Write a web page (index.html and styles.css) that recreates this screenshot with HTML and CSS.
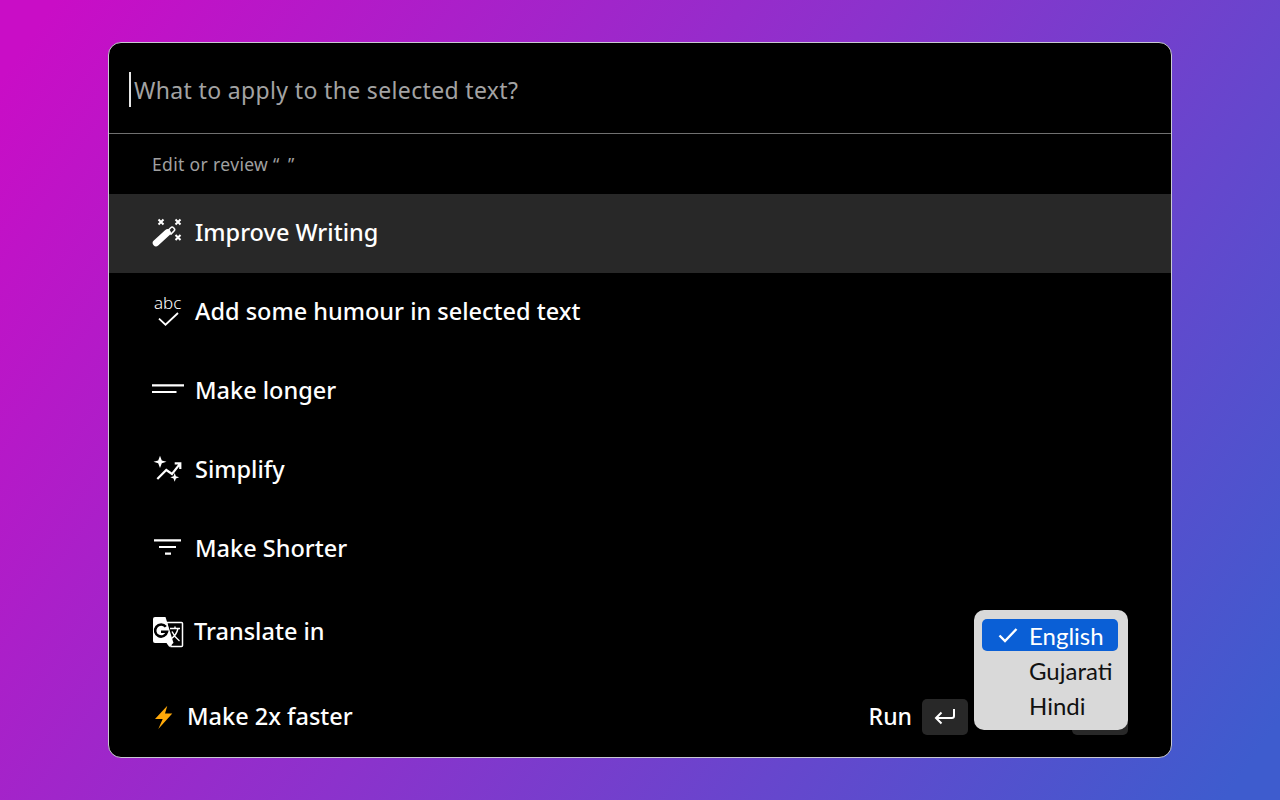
FILE: index.html
```html
<!DOCTYPE html>
<html lang="en">
<head>
<meta charset="utf-8">
<title>Apply to selected text</title>
<link rel="stylesheet" href="styles.css">
</head>
<body>

<div class="panel">
  <div class="prompt">
    <span class="caret"></span>
    <span class="placeholder">What to apply to the selected text?</span>
  </div>

  <div class="section_title">Edit or review “&thinsp; ”</div>

  <div class="row active">
    <svg class="icon" viewBox="0 0 32 32" fill="none" stroke="#fff">
      <path d="M4 26 15.500 15.500" stroke-width="6.500" stroke-linecap="round"/>
      <path d="M16 13.500 19 10.500a1.500 1.500 0 0 1 2.200 0l1 1a1.500 1.500 0 0 1 0 2.200L19 17z" stroke-width="1.600"/>
      <path d="M6.500 2.500l5 5m0-5l-5 5M23.500 2.500l5 5m0-5l-5 5M23.500 18l5 5m0-5l-5 5" stroke-width="2"/>
    </svg>
    <span class="label">Improve Writing</span>
  </div>

  <div class="row">
    <svg class="icon" viewBox="0 0 32 32" fill="none" stroke="#fff" stroke-width="1.800">
      <text x="2" y="12.700" class="abc">abc</text>
      <path d="M7 22.700l6.500 6L26 17"/>
    </svg>
    <span class="label">Add some humour in selected text</span>
  </div>

  <div class="row">
    <svg class="icon" viewBox="0 0 32 32" fill="none" stroke="#fff" stroke-width="2.200">
      <path d="M0 10.300h32M0 17h24.500"/>
    </svg>
    <span class="label">Make longer</span>
  </div>

  <div class="row">
    <svg class="icon" viewBox="0 0 32 32" fill="#fff">
      <path d="M8 1.800l1.800 4.700 4.700 1.300-4.700 1.500L8 14 6.200 9.300 1.500 7.800l4.700-1.300z"/>
      <path d="M22.700 19l1.200 3.200 3.200 1.100-3.200 1.100-1.200 3.300-1.200-3.300-3.200-1.100 3.200-1.100z"/>
      <path d="M5.300 25l9-9 5.700 4 8.300-10.700M22.700 9.300h5.600V15" fill="none" stroke="#fff" stroke-width="2.200"/>
    </svg>
    <span class="label">Simplify</span>
  </div>

  <div class="row">
    <svg class="icon" viewBox="0 0 32 32" fill="none" stroke="#fff" stroke-width="2.200">
      <path d="M2 7.300h27M7 14h17M13 20.700h6"/>
    </svg>
    <span class="label">Make Shorter</span>
  </div>

  <div class="row row_translate">
    <svg class="icon" viewBox="0 0 32 32">
      <path d="M14.500 6.500H29.500a1 1 0 0 1 1 1V29.500a1 1 0 0 1-1 1H19z" fill="#000" stroke="#fff" stroke-width="1.500"/>
      <path d="M3 1H13.500L21.500 27H3a2 2 0 0 1-2-2V3a2 2 0 0 1 2-2z" fill="#fff"/>
      <path d="M14.500 27h6.800l-4 4z" fill="#fff"/>
      <path d="M13.800 10.800A6 6 0 1 0 15 15.800H9" fill="none" stroke="#000" stroke-width="2.600"/>
      <path d="M18 12.500h10M23 10.500v2M26 12.500c-1 4.500-3.500 8-7 10.500M20 15.500c1.500 3.500 3.500 6.500 7.500 9.500" fill="none" stroke="#fff" stroke-width="1.400"/>
    </svg>
    <span class="label">Translate in</span>
  </div>

  <div class="row row_bottom">
    <svg class="bolt" viewBox="0 0 24 26">
      <path d="M15.300 1.700 3 15h7.700L6.300 25l14-15.500H13z" fill="#ffa90a"/>
    </svg>
    <span class="label">Make 2x faster</span>
    <span class="run">Run</span>
    <span class="key">
      <svg viewBox="0 0 24 18" width="24" height="18" fill="none" stroke="#fff" stroke-width="2">
        <path d="M21 1v7a2 2 0 0 1-2 2H3M8.500 4.500 3 10l5.500 5.500"/>
      </svg>
    </span>
    <span class="key key_hidden"></span>
  </div>

  <div class="menu">
    <div class="menu_item selected">
      <svg class="check" viewBox="0 0 20 16" fill="none" stroke="#fff" stroke-width="2.400">
        <path d="M1.500 8.500l5.500 5.500L18.500 2"/>
      </svg>
      English
    </div>
    <div class="menu_item">Gujarati</div>
    <div class="menu_item">Hindi</div>
  </div>
</div>

</body>
</html>
```

FILE: styles.css
```css
html,body {
  margin: 0;
  height: 100%;
}

body {
  width: 1280px;
  height: 800px;
  overflow: hidden;
  display: flex;
  align-items: flex-start;
  justify-content: center;
  background: linear-gradient(125deg, #c90dc6 3%, #8c32cc 48%, #3e5cce 97%);
  font-family: 'Noto Sans', 'Open Sans', sans-serif;
  color: white;
}

.panel {
  position: relative;
  width: 1062px;
  height: 714px;
  margin-top: 42px;
  background: black;
  border: 1px solid #c9c9d2;
  border-radius: 13px;
  overflow: hidden;
}

.prompt {
  height: 87px;
  padding-top: 3px;
  display: flex;
  align-items: center;
  padding-left: 20px;
  border-bottom: 1px solid #707070;
}

.caret {
  width: 2px;
  height: 35px;
  background: #e6e6e6;
  margin-right: 3px;
}

.placeholder {
  font-size: 23px;
  color: #a3a3a3;
  letter-spacing: 0.35px;
  padding-top: 1px;
}

.section_title {
  height: 60px;
  display: flex;
  align-items: center;
  padding-left: 43px;
  font-size: 17.5px;
  letter-spacing: 0.35px;
  color: #a0a0a0;
}

.row {
  height: 78.8px;
  display: flex;
  align-items: center;
  padding: 0 43px;
  box-sizing: border-box;
}

.row.active {
  background: #282828;
}

.row_translate {
  height: 85px;
  padding-top: 3px;
}

.row_bottom {
  height: 85px;
  padding-top: 3px;
}

.icon {
  width: 32px;
  height: 32px;
  margin-right: 11px;
  flex: none;
  overflow: visible;
}

.row_translate .icon {
  margin-right: 10px;
}

.abc {
  font-family: 'Noto Sans', sans-serif;
  font-size: 17px;
  font-weight: 300;
  fill: white;
  stroke: none;
}

.bolt {
  width: 24px;
  height: 26px;
  margin-right: 11px;
  flex: none;
}

.label {
  font-size: 23.5px;
  font-weight: 500;
  padding-bottom: 2px;
}

.run {
  margin-left: auto;
  font-size: 23px;
  font-weight: 500;
  margin-right: 10px;
  padding-bottom: 2px;
}

.key {
  width: 46px;
  height: 36px;
  border-radius: 5px;
  background: #282828;
  display: flex;
  align-items: center;
  justify-content: center;
}

.key_hidden {
  width: 56px;
  margin-left: 104px;
}

.menu {
  position: absolute;
  left: 865px;
  top: 567px;
  width: 154px;
  height: 120px;
  box-sizing: border-box;
  padding: 9px 10px 9px 8px;
  background: #d9d9d9;
  border-radius: 10px;
  font-family: 'Lato', sans-serif;
  font-size: 24px;
  color: #111;
}

.menu_item {
  height: 32px;
  line-height: 34px;
  margin-bottom: 3px;
  padding-left: 47px;
  white-space: nowrap;
}

.menu_item.selected {
  display: flex;
  align-items: center;
  box-sizing: border-box;
  padding-top: 2px;
  background: #0a5fd6;
  border-radius: 5px;
  color: white;
  padding-left: 16px;
}

.check {
  width: 20px;
  height: 16px;
  margin-right: 11px;
  margin-bottom: 2px;
}
```
